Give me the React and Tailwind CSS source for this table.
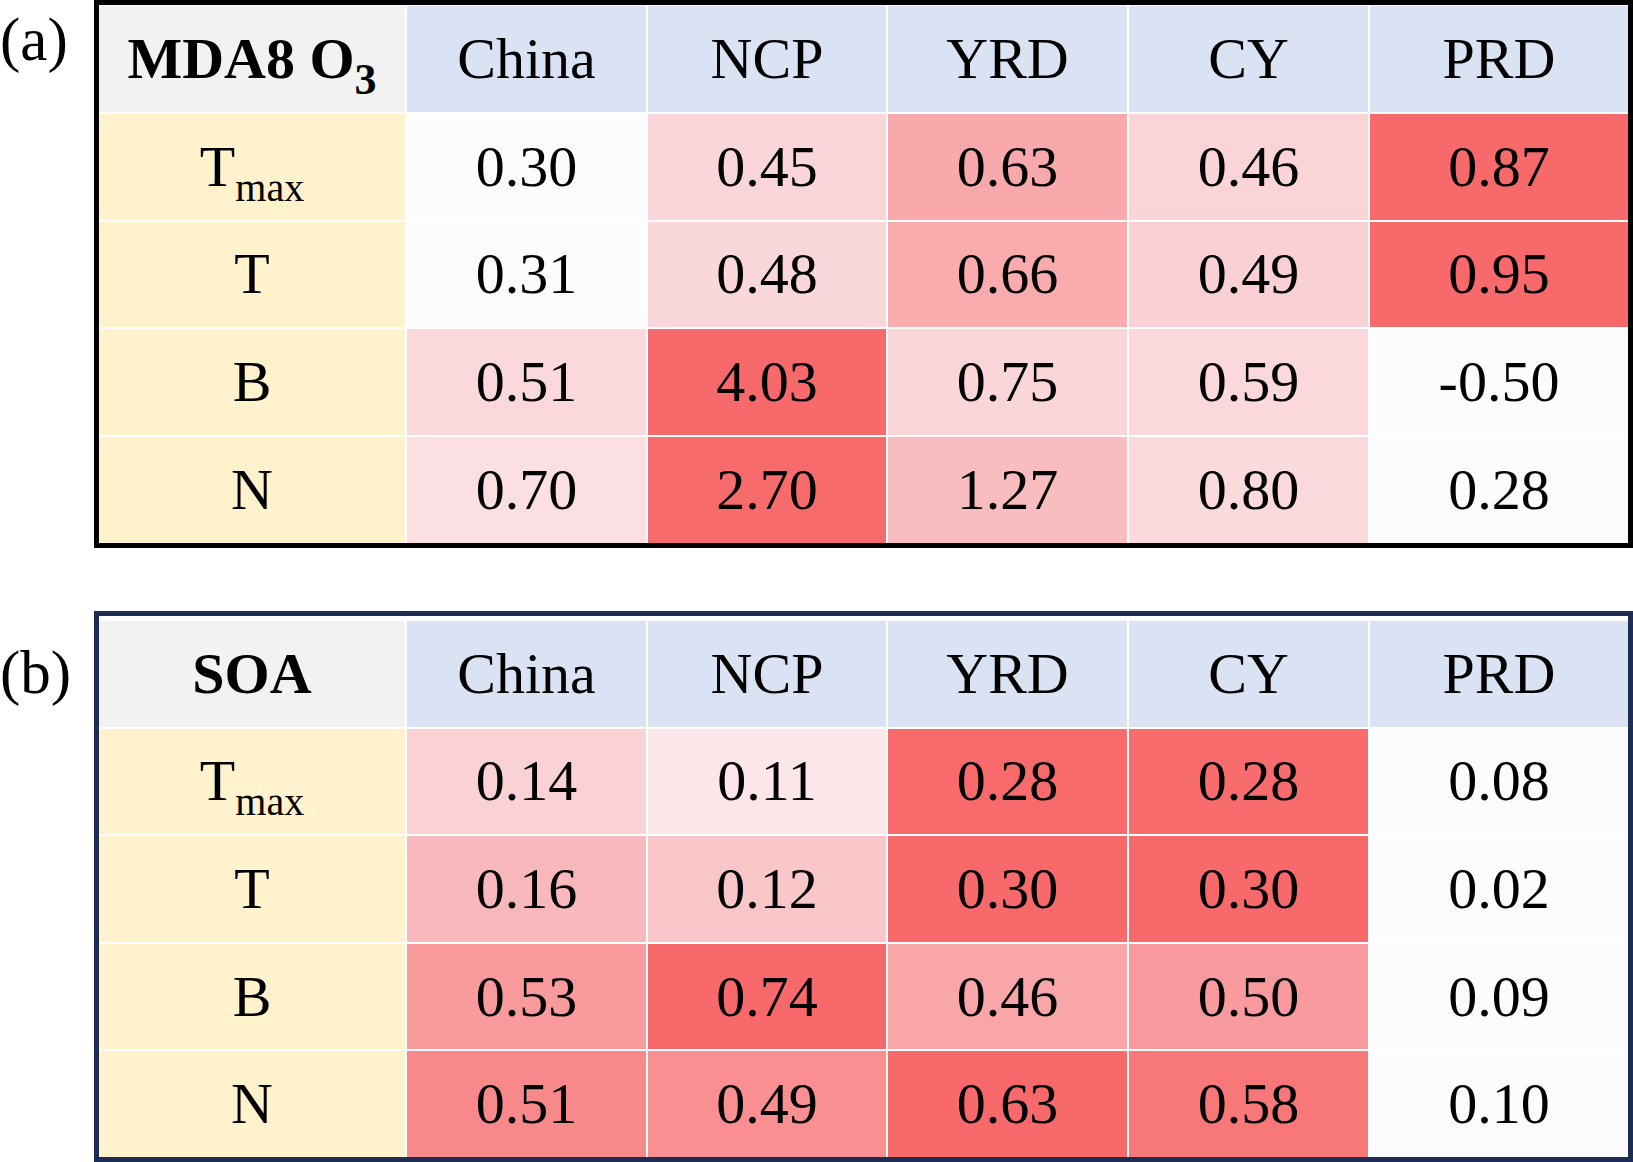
const cols = ['China', 'NCP', 'YRD', 'CY', 'PRD']

const panels = [
  {
    tag: '(a)',
    title: (
      <span className="font-bold">
        MDA8 O<span className="relative top-[16px] text-[44px] leading-none">3</span>
      </span>
    ),
    frame: 'border-black pt-px',
    labelPad: 'pt-[9px]',
    rows: [
      ['max', ['0.30', '#fcfcff'], ['0.45', '#fad6da'], ['0.63', '#f9a9ab'], ['0.46', '#fad4d7'], ['0.87', '#f8696b']],
      ['T', ['0.31', '#fcfcff'], ['0.48', '#fad7da'], ['0.66', '#f9abad'], ['0.49', '#f9d0d3'], ['0.95', '#f8696b']],
      ['B', ['0.51', '#fbd8db'], ['4.03', '#f8696b'], ['0.75', '#fbd6d9'], ['0.59', '#fbd8db'], ['-0.50', '#fcfcff']],
      ['N', ['0.70', '#fbdfe2'], ['2.70', '#f86b6d'], ['1.27', '#f9bdc0'], ['0.80', '#fbdadd'], ['0.28', '#fcfcff']],
    ],
  },
  {
    tag: '(b)',
    title: <span className="font-bold">SOA</span>,
    frame: 'border-[#1d2c52] pt-[5px]',
    labelPad: 'pt-[31px]',
    rows: [
      ['max', ['0.14', '#fad1d4'], ['0.11', '#fbe6e9'], ['0.28', '#f86a6c'], ['0.28', '#f86c6e'], ['0.08', '#fcfcff']],
      ['T', ['0.16', '#f9b8bb'], ['0.12', '#f9c6c9'], ['0.30', '#f8696b'], ['0.30', '#f8696b'], ['0.02', '#fcfcff']],
      ['B', ['0.53', '#f99a9c'], ['0.74', '#f8696b'], ['0.46', '#f9a6a9'], ['0.50', '#f99b9e'], ['0.09', '#fcfcff']],
      ['N', ['0.51', '#f8898b'], ['0.49', '#f98f91'], ['0.63', '#f8696b'], ['0.58', '#f87778'], ['0.10', '#fcfcff']],
    ],
  },
]

function RowLabel({ name }) {
  if (name === 'max') {
    return (
      <span>
        T<span className="relative top-[15px] text-[40px] leading-none">max</span>
      </span>
    )
  }
  return <span>{name}</span>
}

function Panel({ panel, height }) {
  return (
    <div className={`flex ${height}`}>
      <div className={`w-[94px] shrink-0 text-[61px] leading-none ${panel.labelPad}`}>{panel.tag}</div>
      <div className={`flex-1 border-[5px] bg-white ${panel.frame}`}>
        <div className="grid h-full grid-cols-[306px_239px_238px_239px_239px_258px] grid-rows-5 gap-[2px] bg-white">
          <div className="flex items-center justify-center bg-[#f2f2f2]">{panel.title}</div>
          {cols.map((c) => (
            <div key={c} className="flex items-center justify-center bg-[#dae3f3]">{c}</div>
          ))}
          {panel.rows.map(([name, ...cells]) => (
            <Row key={name} name={name} cells={cells} />
          ))}
        </div>
      </div>
    </div>
  )
}

function Row({ name, cells }) {
  return (
    <>
      <div className="flex items-center justify-center bg-[#fff2cc]">
        <RowLabel name={name} />
      </div>
      {cells.map(([v, bg], i) => (
        <div key={i} className="flex items-center justify-center" style={{ backgroundColor: bg }}>
          {v}
        </div>
      ))}
    </>
  )
}

export default function App() {
  return (
    <div
      className="flex h-[1162px] w-[1633px] flex-col gap-[63px] bg-white text-[58px] leading-none text-black"
      style={{ fontFamily: '"Liberation Serif", "Times New Roman", serif' }}
    >
      <Panel panel={panels[0]} height="h-[548px]" />
      <Panel panel={panels[1]} height="h-[551px]" />
    </div>
  )
}
